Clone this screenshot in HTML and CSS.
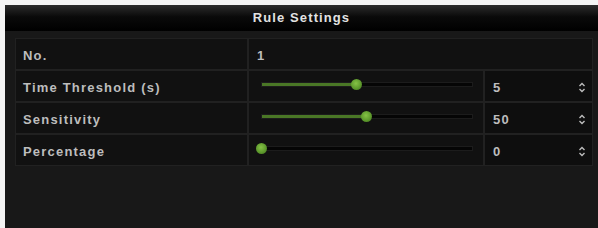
FILE: index.html
```html
<!DOCTYPE html>
<html lang="en">
<head>
  <meta charset="UTF-8">
  <title>Rule Settings</title>
  <link rel="stylesheet" href="styles.css">
</head>
<body>
  <div class="dialog">
    <div class="title">Rule Settings</div>
    <div class="table">
      <div class="cell label">No.</div>
      <div class="cell wide">1</div>

      <div class="cell label">Time Threshold (s)</div>
      <div class="cell slider">
        <div class="track"><div class="fill" style="width: 45%"></div></div>
      </div>
      <div class="cell spin">5 <svg class="arrows" width="8" height="11" viewBox="0 0 8 11"><path d="M1.5 4 L4 1.5 L6.5 4 M1.5 7 L4 9.5 L6.5 7" /></svg></div>

      <div class="cell label">Sensitivity</div>
      <div class="cell slider">
        <div class="track"><div class="fill" style="width: 50%"></div></div>
      </div>
      <div class="cell spin">50 <svg class="arrows" width="8" height="11" viewBox="0 0 8 11"><path d="M1.5 4 L4 1.5 L6.5 4 M1.5 7 L4 9.5 L6.5 7" /></svg></div>

      <div class="cell label">Percentage</div>
      <div class="cell slider">
        <div class="track"><div class="fill" style="width: 0%"></div></div>
      </div>
      <div class="cell spin">0 <svg class="arrows" width="8" height="11" viewBox="0 0 8 11"><path d="M1.5 4 L4 1.5 L6.5 4 M1.5 7 L4 9.5 L6.5 7" /></svg></div>
    </div>
  </div>
</body>
</html>
```

FILE: styles.css
```css
* {
  box-sizing: border-box;
}

body {
  margin: 0;
  background: #f4f4f4;
  font-family: "Liberation Sans", Arial, sans-serif;
}

.dialog {
  margin: 5px 0 0 5px;
  height: 223px;
  background: #181818;
}

.title {
  height: 26px;
  line-height: 26px;
  text-align: center;
  color: #e2e2e2;
  font-size: 13px;
  font-weight: bold;
  letter-spacing: 1.1px;
  background: linear-gradient(#2c2c2c, #0a0a0a 45%, #000);
}

.table {
  display: grid;
  grid-template-columns: 231px 234px 1fr;
  grid-auto-rows: 30px;
  gap: 2px;
  margin: 7px 5px 0 10px;
  padding: 1px;
  background: #212121;
}

.cell {
  background: #111;
  color: #bdbdbd;
  font-size: 13px;
  font-weight: bold;
  letter-spacing: 1.2px;
  display: flex;
  align-items: center;
  padding-top: 3px;
}

.label {
  padding-left: 7px;
}

.wide {
  grid-column: 2 / 4;
  padding-left: 8px;
}

.slider {
  padding: 0 11px 0 13px;
}

.track {
  position: relative;
  flex: 1;
  height: 3px;
  margin-top: -3px;
  background: #050505;
  box-shadow: 0 0 0 1px #1c1c1c;
}

.fill {
  position: relative;
  height: 100%;
  background: #4a7726;
}

.fill::after {
  content: "";
  position: absolute;
  right: -5px;
  top: -4px;
  width: 11px;
  height: 11px;
  border-radius: 50%;
  background: radial-gradient(circle at 45% 40%, #86c246, #5b972b 60%, #3c661b);
}

.spin {
  justify-content: space-between;
  padding: 3px 6px 0 8px;
  background: #0e0e0e;
}

.arrows {
  fill: none;
  stroke: #bdbdbd;
  stroke-width: 1.4;
}
```
